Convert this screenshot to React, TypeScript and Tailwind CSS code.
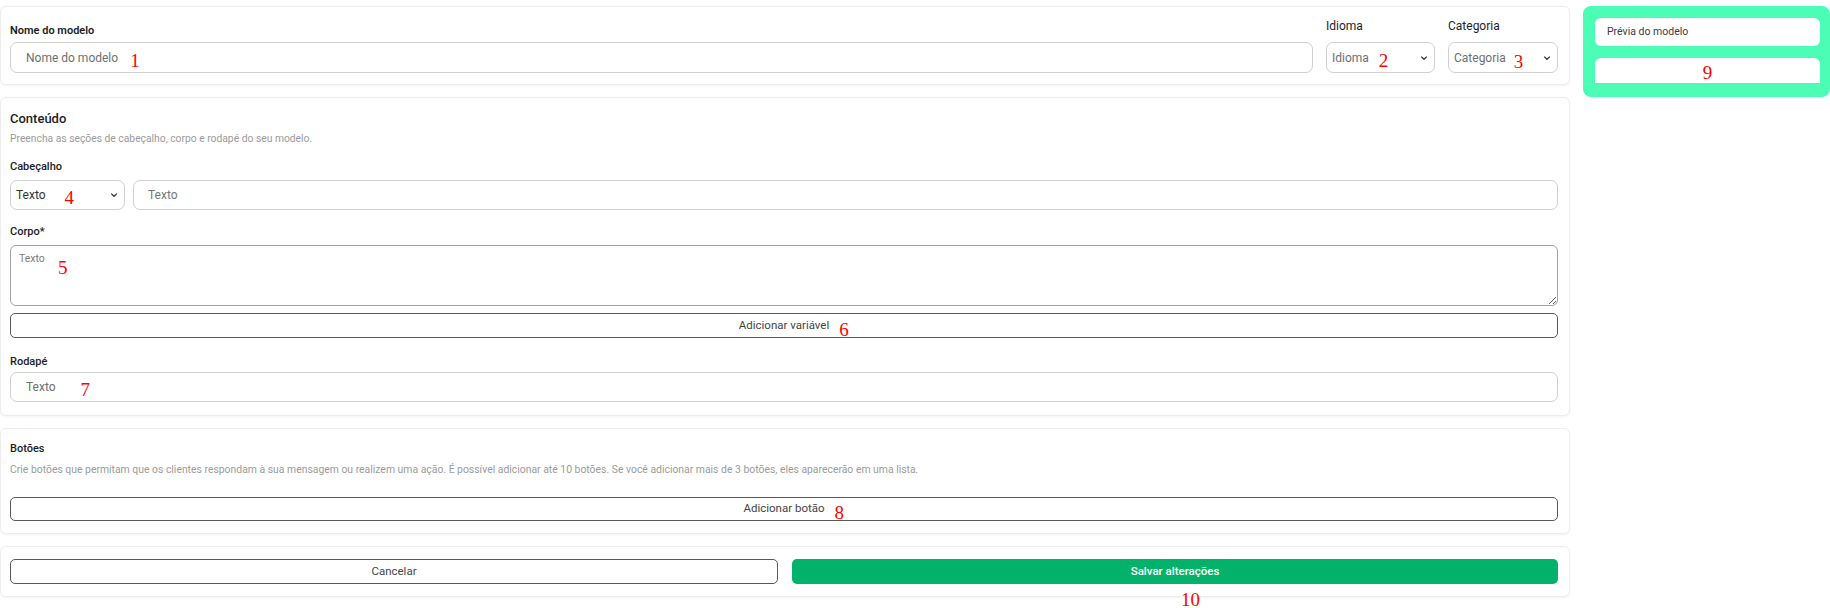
import { ReactNode } from 'react';

const font = { fontFamily: 'Roboto, "Noto Sans", sans-serif' };

const Mark = ({ n, className = '' }: { n: string; className?: string }) => (
  <span
    className={`text-[19px] leading-none text-[#ff0000] ${className}`}
    style={{ fontFamily: '"Liberation Serif", serif' }}
  >
    {n}
  </span>
);

const Chevron = () => (
  <svg width="8" height="6" viewBox="0 0 8 6" className="shrink-0">
    <path d="M1.2 1.6 L4 4.3 L6.8 1.6" fill="none" stroke="#333" strokeWidth="1.3" />
  </svg>
);

const Card = ({ children, className = '' }: { children: ReactNode; className?: string }) => (
  <div
    className={`rounded-md border border-[#ededed] bg-white shadow-[0_1px_3px_rgba(0,0,0,0.05)] pl-[9px] pr-[11px] ${className}`}
  >
    {children}
  </div>
);

const OutlineButton = ({ label, mark, className = '' }: { label: string; mark?: string; className?: string }) => (
  <div
    className={`flex items-center justify-center rounded-[5px] border border-[#5a5a5a] bg-white text-[11.5px] text-[#444] ${className}`}
  >
    <span className="relative">
      {label}
      {mark && <Mark n={mark} className="absolute left-full top-[3px] ml-[10px]" />}
    </span>
  </div>
);

export default function App() {
  return (
    <div className="flex min-h-[608px] w-[1830px] items-start bg-white text-[#1d1d1f]" style={font}>
      {/* main form */}
      <div className="flex w-[1570px] shrink-0 flex-col gap-[12px] pb-[12px] pt-[6px]">
        <Card className="pb-[11px] pt-[11px]">
          <div className="flex gap-[13px]">
            <div className="flex flex-1 flex-col">
              <div className="flex h-[24px] items-end pb-[4px] text-[11px] font-semibold leading-[14px]">Nome do modelo</div>
              <div className="flex h-[31px] items-center rounded-[7px] border border-[#d0d0d0] pl-[15px] text-[12px] text-[#6f6f6f]">
                Nome do modelo
                <Mark n="1" className="ml-[12px] mt-[6px]" />
              </div>
            </div>
            <div className="flex w-[109px] flex-col">
              <div className="flex h-[24px] items-end pb-[8px] text-[12px] leading-[16px]">Idioma</div>
              <div className="flex h-[31px] items-center rounded-[7px] border border-[#d0d0d0] pl-[5px] pr-[6px] text-[12px] text-[#6f6f6f]">
                Idioma
                <Mark n="2" className="ml-[10px] mt-[5px]" />
                <span className="flex-1" />
                <Chevron />
              </div>
            </div>
            <div className="flex w-[110px] flex-col">
              <div className="flex h-[24px] items-end pb-[8px] text-[12px] leading-[16px]">Categoria</div>
              <div className="flex h-[31px] items-center rounded-[7px] border border-[#d0d0d0] pl-[5px] pr-[6px] text-[12px] text-[#6f6f6f]">
                Categoria
                <Mark n="3" className="ml-[8px] mt-[8px]" />
                <span className="flex-1" />
                <Chevron />
              </div>
            </div>
          </div>
        </Card>

        <Card className="pb-[13px] pt-[11px]">
          <div className="text-[13px] font-medium leading-[20px]">Conteúdo</div>
          <div className="mt-[3px] text-[10.3px] leading-[14px] text-[#9b9b9b]">
            Preencha as seções de cabeçalho, corpo e rodapé do seu modelo.
          </div>
          <div className="mt-[13px] text-[11px] font-medium leading-[16px]">Cabeçalho</div>
          <div className="mt-[5px] flex h-[30px] gap-[8px]">
            <div className="flex w-[115px] items-center rounded-[7px] border border-[#d0d0d0] pl-[5px] pr-[6px] text-[12px] text-[#333]">
              Texto
              <Mark n="4" className="ml-[19px] mt-[5px]" />
              <span className="flex-1" />
              <Chevron />
            </div>
            <div className="flex flex-1 items-center rounded-[7px] border border-[#d0d0d0] pl-[14px] text-[12px] text-[#777]">
              Texto
            </div>
          </div>
          <div className="mt-[14px] text-[11px] font-medium leading-[16px]">Corpo*</div>
          <div className="relative mt-[5px]">
            <textarea
              readOnly
              placeholder="Texto"
              className="block h-[61px] w-full resize-y rounded-[6px] border border-[#a3a3a3] px-[8px] pt-[6px] text-[10.5px] leading-[14px] outline-none placeholder:text-[#7a7a7a]"
              style={font}
            />
            <Mark n="5" className="absolute left-[48px] top-[13px]" />
          </div>
          <OutlineButton label="Adicionar variável" mark="6" className="mt-[7px] h-[25px]" />
          <div className="mt-[17px] text-[11px] font-medium leading-[14px]">Rodapé</div>
          <div className="mt-[3px] flex h-[30px] items-center rounded-[7px] border border-[#d0d0d0] pl-[15px] text-[12px] text-[#6f6f6f]">
            Texto
            <Mark n="7" className="ml-[25px] mt-[5px]" />
          </div>
        </Card>

        <Card className="pb-[12px] pt-[12px]">
          <div className="text-[11px] font-medium leading-[16px]">Botões</div>
          <div className="mt-[6px] text-[10.4px] leading-[14px] text-[#9b9b9b]">
            Crie botões que permitam que os clientes respondam à sua mensagem ou realizem uma ação. É possível adicionar até 10 botões. Se você adicionar mais de 3 botões, eles aparecerão em uma lista.
          </div>
          <OutlineButton label="Adicionar botão" mark="8" className="mt-[20px] h-[24px]" />
        </Card>

        <Card className="pb-[12px] pt-[12px]">
          <div className="flex gap-[14px]">
            <OutlineButton label="Cancelar" className="h-[25px] flex-1" />
            <div className="relative flex h-[25px] flex-1 items-center justify-center rounded-[5px] bg-[#03b26a] text-[11.5px] font-medium text-white">
              Salvar alterações
              <Mark n="10" className="absolute left-[389px] top-[31px]" />
            </div>
          </div>
        </Card>
      </div>

      {/* preview panel */}
      <div className="ml-[13px] mt-[6px] flex w-[247px] flex-col gap-[12px] rounded-lg bg-[#4cfdb6] pb-[14px] pl-[12px] pr-[10px] pt-[12px]">
        <div className="flex h-[28px] items-center rounded-md bg-white pl-[12px] text-[10.5px] text-[#3a3a4a]">Prévia do modelo</div>
        <div className="flex h-[25px] items-center justify-center rounded-t-md bg-white">
          <Mark n="9" className="mt-[4px]" />
        </div>
      </div>
    </div>
  );
}
